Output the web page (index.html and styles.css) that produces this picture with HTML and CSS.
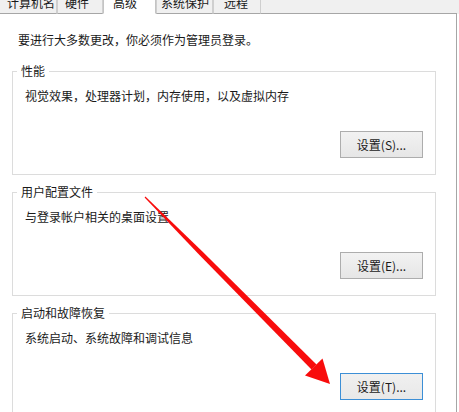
FILE: index.html
```html
<!DOCTYPE html>
<html lang="zh-CN">
<head>
<meta charset="utf-8">
<title>系统属性 - 高级</title>
<link rel="stylesheet" href="styles.css">
</head>
<body>
<div class="tabstrip">
  <div class="tab tab-1"><span class="tab-label">计算机名</span></div>
  <div class="tab tab-2"><span class="tab-label">硬件</span></div>
  <div class="tab tab-3 selected"><span class="tab-label">高级</span></div>
  <div class="tab tab-4"><span class="tab-label">系统保护</span></div>
  <div class="tab tab-5"><span class="tab-label">远程</span></div>
  <div class="tab-filler"></div>
</div>
<div class="panel">
  <p class="intro">要进行大多数更改，你必须作为管理员登录。</p>
  <fieldset class="group group-first">
    <legend>性能</legend>
    <p class="desc">视觉效果，处理器计划，内存使用，以及虚拟内存</p>
    <div class="actions"><button class="btn">设置(S)...</button></div>
  </fieldset>
  <fieldset class="group">
    <legend>用户配置文件</legend>
    <p class="desc">与登录帐户相关的桌面设置</p>
    <div class="actions"><button class="btn">设置(E)...</button></div>
  </fieldset>
  <fieldset class="group">
    <legend>启动和故障恢复</legend>
    <p class="desc">系统启动、系统故障和调试信息</p>
    <div class="actions"><button class="btn btn-default">设置(T)...</button></div>
  </fieldset>
</div>
<svg class="arrow" width="459" height="412" viewBox="0 0 459 412" xmlns="http://www.w3.org/2000/svg">
  <polygon points="145.4,196.6 202.4,251.5 316.5,364.5 311.5,369.5 199.2,254.7 144.6,197.4" fill="#f80c0c"/>
  <polygon points="330,384 322.5,358.5 305,375.5" fill="#f80c0c"/>
</svg>
</body>
</html>
```

FILE: styles.css
```css
html, body {
  margin: 0;
  padding: 0;
  background: #ffffff;
}

body {
  width: 459px;
  height: 412px;
  overflow: hidden;
  position: relative;
  font-family: "Noto Sans CJK SC", "Noto Sans", sans-serif;
  font-size: 12px;
  color: #1a1a1a;
}

.tabstrip {
  display: flex;
  height: 14px;
  background: #f0f0f0;
  overflow: hidden;
}

.tab {
  box-sizing: border-box;
  height: 14px;
  background: #f0f0f0;
  border-left: 1px solid #cfcfcf;
  border-right: 1px solid #cfcfcf;
  border-bottom: 1px solid #a6a6a6;
  overflow: hidden;
}

.tab-label {
  display: block;
  line-height: 16px;
  margin-top: -5px;
  white-space: nowrap;
}

.tab-1 { width: 57px; padding-left: 7px; border-left: none; }
.tab-2 { width: 46px; padding-left: 7px; }
.tab-3 { width: 53px; padding-left: 9px; }
.tab-4 { width: 57px; padding-left: 4px; }
.tab-5 { width: 48px; padding-left: 10px; }

.tab.selected {
  background: #ffffff;
  border-bottom-color: #ffffff;
  border-left-color: #c4c4c4;
  border-right-color: #c4c4c4;
}

.tab-filler {
  flex: 1;
  box-sizing: border-box;
  height: 14px;
  border-bottom: 1px solid #a6a6a6;
  max-width: 196px;
}

.panel {
  box-sizing: border-box;
  width: 457px;
  height: 398px;
  border-right: 1px solid #a6a6a6;
  padding-left: 12px;
  padding-top: 18px;
  background: #ffffff;
}

.intro {
  margin: 0 0 0 6px;
  line-height: 16px;
  white-space: nowrap;
}

.group {
  box-sizing: border-box;
  width: 424px;
  margin: 9px 0 0 0;
  padding: 0 0 16px 0;
  border: 1px solid #dcdcdc;
  min-inline-size: 0;
}

.group-first {
  margin-top: 15px;
}

.group legend {
  margin-left: 4px;
  padding: 0 4px;
  line-height: 16px;
  font-size: 12px;
}

.desc {
  margin: 9px 0 0 12px;
  line-height: 16px;
  white-space: nowrap;
}

.actions {
  display: flex;
  justify-content: flex-end;
  margin-top: 27px;
  padding-right: 12px;
}

.btn {
  box-sizing: border-box;
  width: 83px;
  height: 27px;
  margin: 0;
  padding: 0;
  border: 1px solid #adadad;
  background: linear-gradient(#f2f2f2, #e6e6e6);
  font-family: "Noto Sans CJK SC", "Noto Sans", sans-serif;
  font-size: 12px;
  color: #1a1a1a;
  line-height: 25px;
  text-align: center;
}

.btn-default {
  border-color: #3c8fd6;
  background: linear-gradient(#f0f0f0, #e8e8e8);
}

.arrow {
  position: absolute;
  top: 0;
  left: 0;
  pointer-events: none;
}
```
